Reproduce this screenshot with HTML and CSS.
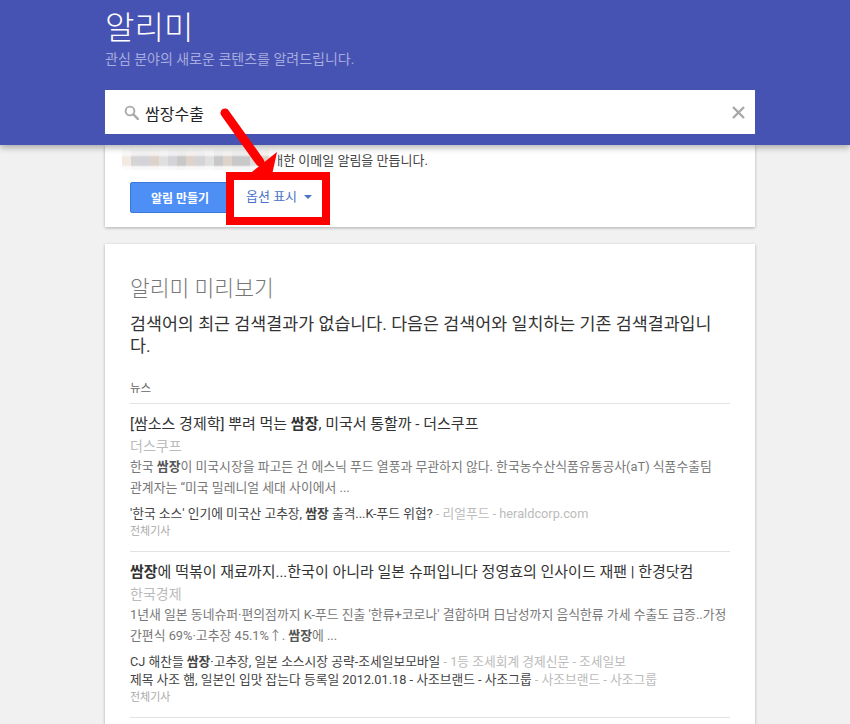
FILE: index.html
```html
<!DOCTYPE html>
<html lang="ko">
<head>
<meta charset="utf-8">
<title>알리미</title>
<link rel="stylesheet" href="styles.css">
</head>
<body>
<header class="masthead">
  <div class="wrap">
    <h1 class="title">알리미</h1>
    <p class="subtitle">관심 분야의 새로운 콘텐츠를 알려드립니다.</p>
    <div class="search">
      <svg class="search-icon" width="15" height="15" viewBox="0 0 15 15"><circle cx="6" cy="6" r="4.4" fill="none" stroke="#aaa" stroke-width="1.9"/><path d="M9.4 9.4l4.4 4.4" stroke="#aaa" stroke-width="2.4" stroke-linecap="round"/></svg>
      <span class="query">쌈장수출</span>
      <svg class="clear" width="13" height="13" viewBox="0 0 13 13"><path d="M1 1l11 11M12 1L1 12" stroke="#a8a8a8" stroke-width="2.4"/></svg>
    </div>
  </div>
</header>
<main class="wrap">
  <section class="card create">
    <p class="notice">에 대한 이메일 알림을 만듭니다.<span class="blur"><i></i><i></i><i></i><i></i><i></i><i></i><i></i><i></i><i></i><i></i><i></i><i></i><i></i><i></i><i></i><i></i><i></i></span></p>
    <div class="actions">
      <button class="primary">알림 만들기</button>
      <div class="options">옵션 표시<span class="caret"></span></div>
    </div>
  </section>
  <section class="card preview">
    <h2 class="preview-title">알리미 미리보기</h2>
    <p class="message">검색어의 최근 검색결과가 없습니다. 다음은 검색어와 일치하는 기존 검색결과입니다.</p>
    <h3 class="section-label">뉴스</h3>
    <article class="item">
      <div class="headline">[쌈소스 경제학] 뿌려 먹는 <b>쌈장</b>, 미국서 통할까 - 더스쿠프</div>
      <div class="source">더스쿠프</div>
      <p class="snippet">한국 <b>쌈장</b>이 미국시장을 파고든 건 에스닉 푸드 열풍과 무관하지 않다. 한국농수산식품유통공사(aT) 식품수출팀 <span class="nowrap">관계자는</span> “미국 밀레니얼 세대 사이에서 ...</p>
      <div class="related">
        <div>'한국 소스' 인기에 미국산 고추장, <b>쌈장</b> 출격...K-푸드 위협? <span class="muted">- 리얼푸드 - heraldcorp.com</span></div>
      </div>
      <div class="all">전체기사</div>
    </article>
    <article class="item">
      <div class="headline"><b>쌈장</b>에 떡볶이 재료까지...한국이 아니라 일본 슈퍼입니다 정영효의 인사이드 재팬 | 한경닷컴</div>
      <div class="source">한국경제</div>
      <p class="snippet">1년새 일본 동네슈퍼·편의점까지 K-푸드 진출 '한류+코로나' 결합하며 日남성까지 음식한류 가세 수출도 급증..가정간편식 69%·고추장 45.1%↑. <b>쌈장</b>에 ...</p>
      <div class="related">
        <div>CJ 해찬들 <b>쌈장</b>·고추장, 일본 소스시장 공략-조세일보모바일 <span class="muted">- 1등 조세회계 경제신문 - 조세일보</span></div>
        <div>제목 사조 햄, 일본인 입맛 잡는다 등록일 2012.01.18 - 사조브랜드 - 사조그룹 <span class="muted">- 사조브랜드 - 사조그룹</span></div>
      </div>
      <div class="all">전체기사</div>
    </article>
  </section>
</main>
<svg class="arrow" width="80" height="90" viewBox="0 0 80 90"><path d="M7 8L42 57" stroke="#f00" stroke-width="9" stroke-linecap="round"/><path d="M59 47L54 70H30Z" fill="#f00"/></svg>
<div class="highlight"></div>
</body>
</html>
```
FILE: styles.css
```css
* { box-sizing: border-box; }
html, body { margin: 0; height: 724px; overflow: hidden; }
body {
  background: #f1f1f1;
  font-family: Roboto, "Noto Sans CJK KR", sans-serif;
  color: #333;
  position: relative;
}
.wrap { width: 650px; margin-left: 105px; }
.masthead {
  height: 145px;
  background: #4753b2;
  box-shadow: 0 3px 6px rgba(0, 0, 0, .28);
  position: relative;
  z-index: 2;
  overflow: hidden;
}
.title {
  margin: 0;
  padding-top: 5px;
  font-size: 32px;
  line-height: 46px;
  font-weight: 300;
  color: #fff;
}
.subtitle {
  margin: 0;
  font-size: 14px;
  line-height: 16px;
  color: #a6acdf;
}
.search {
  margin-top: 23px;
  height: 44px;
  background: #fff;
  display: flex;
  align-items: center;
  padding: 0 10px 0 19px;
}
.search-icon { flex: none; }
.query { margin: 1px 0 0 6px; font-size: 16px; color: #222; flex: 1; }
.clear { flex: none; }
.card {
  background: #fff;
  padding: 0 25px;
  box-shadow: 0 1px 3px rgba(0, 0, 0, .28);
}
.create { height: 82px; }
.notice {
  margin: 0;
  padding: 8px 0 0 126px;
  height: 37px;
  position: relative;
  font-size: 13px;
  line-height: 16px;
  color: #444;
}
.blur {
  position: absolute;
  left: -8px;
  top: 4px;
  width: 156px;
  height: 21px;
  display: flex;
  background: #fff;
}
.blur::after {
  content: "";
  position: absolute;
  inset: 0;
  background: linear-gradient(rgba(255, 255, 255, .85) 0, rgba(255, 255, 255, .7) 6px, rgba(255, 255, 255, .1) 8px, rgba(255, 255, 255, .1) 16px, rgba(255, 255, 255, .85) 18px);
}
.blur i { flex: 1; background: #c2c2c2; }
.blur i:nth-child(1) { background: #f0e8df; }
.blur i:nth-child(2) { background: #d0d0d0; }
.blur i:nth-child(3n) { background: #cfcfd4; }
.blur i:nth-child(4n) { background: #d9cec4; }
.blur i:nth-child(5n) { background: #dcdcdc; }
.blur i:nth-child(17) { background: #f4f4f4; }
.actions { display: flex; align-items: center; }
.primary {
  width: 100px;
  height: 31px;
  padding: 0;
  background: #4d8ff5;
  border: 1px solid #3a78d8;
  border-radius: 2px;
  color: #fff;
  font: 700 12px Roboto, "Noto Sans CJK KR", sans-serif;
}
.options {
  margin-left: 16px;
  margin-top: -4px;
  font-size: 13px;
  color: #4a74c8;
  display: flex;
  align-items: center;
}
.caret {
  margin: 2px 0 0 7px;
  border: 4px solid transparent;
  border-top: 4px solid #4a74c8;
  border-bottom: 0;
}
.preview { margin-top: 17px; padding-top: 30px; height: 600px; }
.preview-title {
  margin: 0;
  font-size: 21.5px;
  line-height: 30px;
  font-weight: 300;
  color: #777;
}
.message {
  margin: 9px 0 0;
  font-size: 17.35px;
  line-height: 22px;
  color: #333;
}
.section-label {
  margin: 23px 0 0;
  padding-bottom: 7px;
  font-size: 11.5px;
  line-height: 16px;
  font-weight: 400;
  color: #666;
  border-bottom: 1px solid #e2e2e2;
}
.item { padding: 10px 0; border-bottom: 1px solid #e2e2e2; }
.headline { font-size: 15px; line-height: 20px; color: #333; }
.source { margin-top: 3px; font-size: 14px; line-height: 18px; color: #bbb; }
.snippet { margin: 1px 0 0; font-size: 12.85px; line-height: 21px; color: #777; }
.snippet b { color: #555; }
.nowrap { white-space: nowrap; }
.related { margin-top: 7px; font-size: 12.75px; line-height: 18px; color: #444; }
.muted { color: #bbb; }
.all { font-size: 11px; line-height: 18px; color: #aaa; }
.arrow { position: absolute; left: 218px; top: 105px; z-index: 4; }
.highlight {
  position: absolute;
  left: 226px;
  top: 172px;
  width: 104px;
  height: 53px;
  border: 8px solid #f00;
  z-index: 5;
}
```
